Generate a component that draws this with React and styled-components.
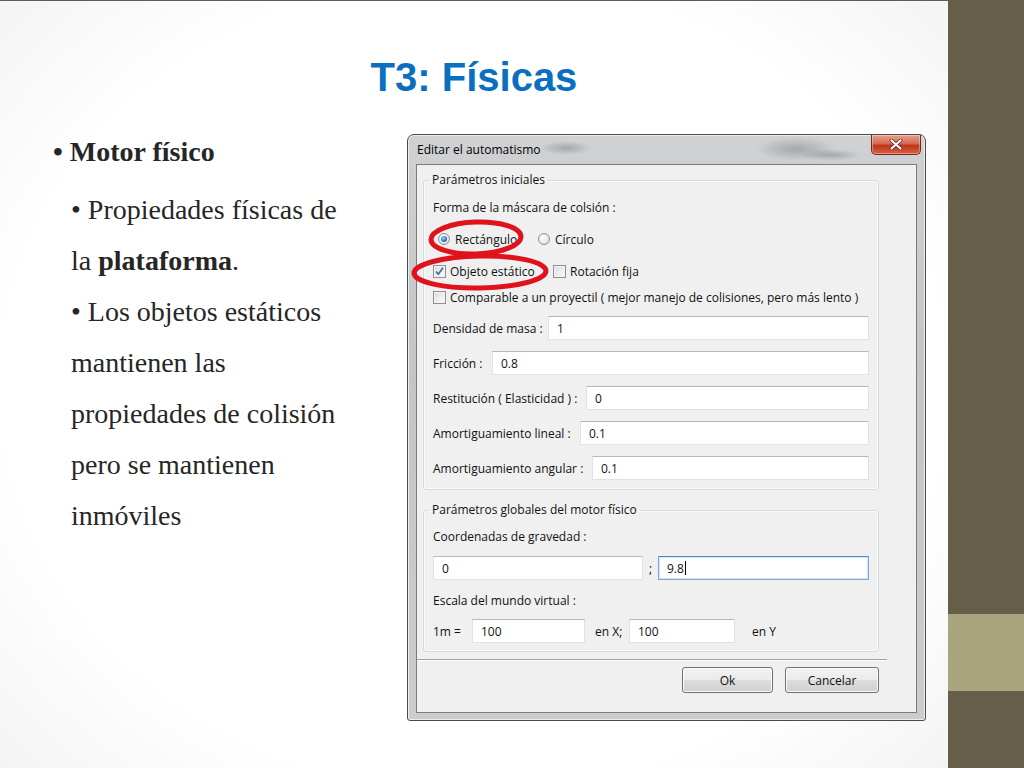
import React from "react";
import styled, { createGlobalStyle } from "styled-components";

const GlobalStyle = createGlobalStyle`
  html, body { margin: 0; padding: 0; }
  body { width: 1024px; height: 768px; overflow: hidden; background: #fff; }
  * { box-sizing: border-box; }
`;

const Page = styled.div`
  display: flex;
  width: 1024px;
  height: 768px;
`;

const Slide = styled.div`
  width: 948px;
  height: 768px;
  display: flex;
  flex-direction: column;
  border-top: 1px solid #5c5c5c;
  background:
    radial-gradient(ellipse 80% 85% at 50% 50%, #ffffff 62%, #ededed 100%);
`;

const Side = styled.div`
  width: 76px;
  height: 768px;
  display: flex;
  flex-direction: column;
`;

const Band = styled.div`
  height: ${(p) => p.$h}px;
  background: ${(p) => p.$c};
`;

const TitleArea = styled.div`
  height: 133px;
  padding-top: 53px;
  text-align: center;
`;

const Title = styled.h1`
  margin: 0;
  font-family: "Liberation Sans", Arial, sans-serif;
  font-weight: bold;
  font-size: 40px;
  line-height: 46px;
  color: #0b6fc0;
`;

const Body = styled.div`
  display: flex;
  align-items: flex-start;
`;

const TextColumn = styled.div`
  width: 407px;
  padding-left: 53px;
  font-family: "Liberation Serif", "Times New Roman", serif;
  font-size: 28px;
  color: #262626;
`;

const MainPoint = styled.div`
  line-height: 36px;
  font-weight: bold;
`;

const SubPoints = styled.div`
  margin-top: 14px;
  margin-left: 18px;
  line-height: 51px;
`;

const SubPoint = styled.div``;

/* ---------- Dialog ---------- */

const Window = styled.div`
  position: relative;
  width: 519px;
  height: 587px;
  display: flex;
  flex-direction: column;
  padding: 0 8px 7px 8px;
  border: 1px solid #4a4a4a;
  border-radius: 7px 7px 3px 3px;
  background: linear-gradient(to bottom, #d0d1d3 0%, #c3c5c8 40%, #cbccce 100%);
  box-shadow: inset 0 0 0 1px #eeeeee;
  font-family: "Open Sans", "Noto Sans", sans-serif;
  font-size: 12px;
  color: #111;
`;

const TitleBar = styled.div`
  height: 29px;
  display: flex;
  align-items: flex-start;
  justify-content: space-between;
  background:
    radial-gradient(ellipse 26px 7px at 150px 13px, rgba(70, 70, 70, 0.3), transparent),
    radial-gradient(ellipse 40px 12px at 380px 14px, rgba(60, 60, 60, 0.28), transparent),
    radial-gradient(ellipse 30px 6px at 415px 20px, rgba(40, 40, 40, 0.24), transparent);
`;

const WindowTitle = styled.span`
  margin-top: 6px;
  margin-left: 1px;
  font-size: 12px;
  line-height: 18px;
  color: #000;
`;

const CloseButton = styled.div`
  width: 50px;
  height: 20px;
  margin-right: -4px;
  border: 1px solid #6b2a22;
  border-top: none;
  border-radius: 0 0 5px 5px;
  background: linear-gradient(to bottom, #e8a08f 0%, #d66a52 45%, #c0351c 55%, #d9603f 100%);
  display: flex;
  align-items: center;
  justify-content: center;
  box-shadow: inset 0 0 0 1px rgba(255, 255, 255, 0.35);
`;

const Client = styled.div`
  flex: 1;
  display: flex;
  flex-direction: column;
  background: #f0f0f0;
  border: 1px solid #7c7c7c;
`;

const GroupBox = styled.fieldset`
  width: 456px;
  min-width: 0;
  margin: ${(p) => p.$mt}px 0 0 6px;
  padding: 0 9px ${(p) => p.$pb}px 9px;
  border: 1px solid #d5dbe0;
  border-radius: 3px;
  box-shadow: inset 0 0 0 1px #fafafa;
`;

const Legend = styled.legend`
  margin-left: -3px;
  padding: 0 2px;
  font-size: 12px;
  line-height: 16px;
`;

const Row = styled.div`
  display: flex;
  align-items: center;
  height: ${(p) => p.$h || 20}px;
  margin-top: ${(p) => p.$mt}px;
  padding-left: ${(p) => p.$pl || 0}px;
`;

const Text = styled.span`
  font-size: 12px;
  white-space: nowrap;
  width: ${(p) => (p.$w ? `${p.$w}px` : "auto")};
  padding-left: ${(p) => p.$pl || 0}px;
  text-align: ${(p) => p.$align || "left"};
  flex: none;
`;

const Option = styled.label`
  display: flex;
  align-items: center;
  gap: ${(p) => p.$gap}px;
  width: ${(p) => (p.$w ? `${p.$w}px` : "auto")};
  font-size: 12px;
  white-space: nowrap;
`;

const RadioCircle = styled.span`
  width: 12px;
  height: 12px;
  border-radius: 50%;
  border: 1px solid #8c8f94;
  background: radial-gradient(circle at 40% 35%, #ffffff 0%, #e6e7e9 60%, #cfd1d4 100%);
  display: flex;
  align-items: center;
  justify-content: center;
  flex: none;
`;

const RadioDot = styled.span`
  width: 6px;
  height: 6px;
  border-radius: 50%;
  background: radial-gradient(circle at 40% 35%, #9fd0f5 0%, #2a7bc5 55%, #134c86 100%);
`;

const CheckSquare = styled.span`
  width: 13px;
  height: 13px;
  border: 1px solid #8e8f8f;
  background: linear-gradient(135deg, #d6d8db 0%, #eceef0 55%, #fafafa 100%);
  box-shadow: inset 0 0 0 1px #f3f3f3;
  display: flex;
  align-items: center;
  justify-content: center;
  flex: none;
`;

const TextBox = styled.div`
  height: 24px;
  width: ${(p) => (p.$w ? `${p.$w}px` : "auto")};
  flex: ${(p) => (p.$w ? "none" : "1")};
  display: flex;
  align-items: center;
  padding-left: 8px;
  background: #fff;
  border: 1px solid ${(p) => (p.$focus ? "#7aa7d6" : "#dfe3e8")};
  border-top-color: ${(p) => (p.$focus ? "#4f86c2" : "#b5b9bf")};
  box-shadow: ${(p) => (p.$focus ? "inset 0 0 0 1px #d6e8f7" : "none")};
  font-size: 12px;
`;

const Caret = styled.span`
  width: 1px;
  height: 14px;
  background: #000;
  margin-left: 1px;
`;

const Separator = styled.div`
  width: 470px;
  margin-top: 7px;
  border-top: 1px solid #a0a0a0;
  border-bottom: 1px solid #ffffff;
`;

const ButtonRow = styled.div`
  width: 462px;
  margin-top: 6px;
  display: flex;
  justify-content: flex-end;
  gap: 12px;
`;

const Button = styled.div`
  width: ${(p) => p.$w}px;
  height: 26px;
  display: flex;
  align-items: center;
  justify-content: center;
  border: 1px solid #707070;
  border-radius: 3px;
  background: linear-gradient(to bottom, #f2f2f2 0%, #ebebeb 48%, #dddddd 52%, #cfcfcf 100%);
  box-shadow: inset 0 0 0 1px #fbfbfb;
  font-size: 12px;
`;

const Annotation = styled.svg`
  position: absolute;
  left: -1px;
  top: -1px;
  pointer-events: none;
`;

const Radio = ({ checked, label, w }) => (
  <Option $w={w} $gap={5}>
    <RadioCircle>{checked && <RadioDot />}</RadioCircle>
    {label}
  </Option>
);

const Check = ({ checked, label, w }) => (
  <Option $w={w} $gap={4}>
    <CheckSquare>
      {checked && (
        <svg width="11" height="11" viewBox="0 0 11 11">
          <path d="M2 5.5 L4.3 8.3 L9 1.8" fill="none" stroke="#44679d" strokeWidth="1.6" />
        </svg>
      )}
    </CheckSquare>
    {label}
  </Option>
);

const Field = ({ label, w, value, mt }) => (
  <Row $h={24} $mt={mt}>
    <Text $w={w}>{label}</Text>
    <TextBox>{value}</TextBox>
  </Row>
);

export default function App() {
  return (
    <>
      <GlobalStyle />
      <Page>
        <Slide>
          <TitleArea>
            <Title>T3: Físicas</Title>
          </TitleArea>
          <Body>
            <TextColumn>
              <MainPoint>• Motor físico</MainPoint>
              <SubPoints>
                <SubPoint>
                  • Propiedades físicas de
                  <br />
                  la <b>plataforma</b>.
                </SubPoint>
                <SubPoint>
                  • Los objetos estáticos
                  <br />
                  mantienen las
                  <br />
                  propiedades de colisión
                  <br />
                  pero se mantienen
                  <br />
                  inmóviles
                </SubPoint>
              </SubPoints>
            </TextColumn>

            <Window>
              <TitleBar>
                <WindowTitle>Editar el automatismo</WindowTitle>
                <CloseButton>
                  <svg width="14" height="11" viewBox="0 0 14 11">
                    <path d="M2.5 1.5 L11.5 9.5 M11.5 1.5 L2.5 9.5" stroke="#5a1d12" strokeWidth="3.6" strokeLinecap="round" />
                    <path d="M2.5 1.5 L11.5 9.5 M11.5 1.5 L2.5 9.5" stroke="#ffffff" strokeWidth="2.2" strokeLinecap="round" />
                  </svg>
                </CloseButton>
              </TitleBar>
              <Client>
                <GroupBox $mt={7} $pb={9}>
                  <Legend>Parámetros iniciales</Legend>
                  <Row $mt={9}>
                    <Text>Forma de la máscara de colsión :</Text>
                  </Row>
                  <Row $mt={12} $pl={5}>
                    <Radio checked label="Rectángulo" w={100} />
                    <Radio label="Círculo" />
                  </Row>
                  <Row $mt={12}>
                    <Check checked label="Objeto estático" w={120} />
                    <Check label="Rotación fija" />
                  </Row>
                  <Row $mt={6}>
                    <Check label="Comparable a un proyectil ( mejor manejo de colisiones, pero más lento )" />
                  </Row>
                  <Field mt={9} w={115} label="Densidad de masa :" value="1" />
                  <Field mt={11} w={59} label="Fricción :" value="0.8" />
                  <Field mt={11} w={153} label="Restitución ( Elasticidad ) :" value="0" />
                  <Field mt={11} w={147} label="Amortiguamiento lineal :" value="0.1" />
                  <Field mt={11} w={159} label="Amortiguamiento angular :" value="0.1" />
                </GroupBox>

                <GroupBox $mt={12} $pb={8}>
                  <Legend>Parámetros globales del motor físico</Legend>
                  <Row $mt={8}>
                    <Text>Coordenadas de gravedad :</Text>
                  </Row>
                  <Row $h={24} $mt={10}>
                    <TextBox $w={210}>0</TextBox>
                    <Text $w={15} $align="center">;</Text>
                    <TextBox $focus>
                      9.8
                      <Caret />
                    </TextBox>
                  </Row>
                  <Row $mt={10}>
                    <Text>Escala del mundo virtual :</Text>
                  </Row>
                  <Row $h={24} $mt={9}>
                    <Text $w={39}>1m =</Text>
                    <TextBox $w={113}>100</TextBox>
                    <Text $w={44} $pl={10}>en X;</Text>
                    <TextBox $w={106}>100</TextBox>
                    <Text $pl={17}>en Y</Text>
                  </Row>
                </GroupBox>

                <Separator />
                <ButtonRow>
                  <Button $w={91}>Ok</Button>
                  <Button $w={94}>Cancelar</Button>
                </ButtonRow>
              </Client>

              <Annotation width="519" height="587" viewBox="0 0 519 587">
                <ellipse cx="69" cy="104" rx="45" ry="16" fill="none" stroke="#e0121c" strokeWidth="5" transform="rotate(-2 69 104)" />
                <ellipse cx="73" cy="138" rx="66" ry="16" fill="none" stroke="#e0121c" strokeWidth="5" transform="rotate(-1 73 138)" />
              </Annotation>
            </Window>
          </Body>
        </Slide>
        <Side>
          <Band $h={614} $c="#665e48" />
          <Band $h={77} $c="#a9a57f" />
          <Band $h={77} $c="#665e48" />
        </Side>
      </Page>
    </>
  );
}
